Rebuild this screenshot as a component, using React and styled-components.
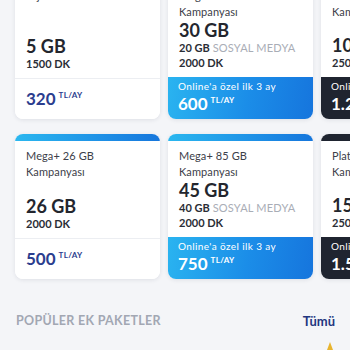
import React from "react";
import styled, { createGlobalStyle } from "styled-components";

const GlobalStyle = createGlobalStyle`
  html, body {
    margin: 0;
    padding: 0;
    background: #f4f5f8;
    font-family: "Lato", "Noto Sans", sans-serif;
    overflow: hidden;
  }
`;

const rows = [
  [
    { title: ["Dijital Paketi"], gb: "5 GB", dk: "1500 DK", price: "320", kind: "plain" },
    { title: ["Mega+ 30 GB", "Kampanyası"], gb: "30 GB", social: "20 GB", dk: "2000 DK", price: "600", kind: "blue" },
    { title: ["Platinum 100 GB", "Kampanyası"], gb: "100 GB", dk: "2500 DK", price: "1.250", kind: "dark" },
  ],
  [
    { title: ["Mega+ 26 GB", "Kampanyası"], gb: "26 GB", dk: "2000 DK", price: "500", kind: "blue", plainFoot: true },
    { title: ["Mega+ 85 GB", "Kampanyası"], gb: "45 GB", social: "40 GB", dk: "2000 DK", price: "750", kind: "blue" },
    { title: ["Platinum 150 GB", "Kampanyası"], gb: "150 GB", dk: "2500 DK", price: "1.500", kind: "dark" },
  ],
];

const Page = styled.div`
  width: 350px;
  height: 350px;
  overflow: hidden;
`;

const Rows = styled.div`
  display: flex;
  flex-direction: column;
  gap: 15px;
  margin-top: -26px;
`;

const Row = styled.div`
  display: flex;
  gap: 8px;
  padding-left: 15px;
`;

const Card = styled.div`
  flex: 0 0 145px;
  height: 145px;
  display: flex;
  flex-direction: column;
  background: #fff;
  border-radius: 8px;
  overflow: hidden;
  box-shadow: 0 1px 4px rgba(30, 40, 70, 0.1);
`;

const Strip = styled.div`
  height: 7px;
  flex-shrink: 0;
  background: ${(p) =>
    p.$kind === "dark"
      ? "#1f2430"
      : p.$kind === "blue"
      ? "linear-gradient(90deg, #2bb7ef 0%, #1e90e6 60%, #1676dc 100%)"
      : "#ffffff"};
`;

const Body = styled.div`
  flex: 1;
  display: flex;
  flex-direction: column;
  padding: 7px 11px 7px;
`;

const Title = styled.div`
  font-size: 11px;
  line-height: 16px;
  color: #3c4049;
  letter-spacing: 0.1px;
`;

const Specs = styled.div`
  margin-top: auto;
  display: flex;
  flex-direction: column;
`;

const Gb = styled.div`
  font-size: 18px;
  line-height: 20px;
  font-weight: 700;
  color: #23262e;
`;

const Small = styled.div`
  font-size: 11px;
  line-height: 15px;
  font-weight: 700;
  color: #2a2d35;
`;

const Social = styled.span`
  font-weight: 400;
  color: #a9adb6;
  margin-left: 3px;
  letter-spacing: 0.2px;
`;

const Foot = styled.div`
  height: 40px;
  flex-shrink: 0;
  display: flex;
  flex-direction: column;
  justify-content: ${(p) => (p.$plain ? "center" : "flex-start")};
  padding: ${(p) => (p.$plain ? "0 11px" : "2px 10px 0")};
  border-top: ${(p) => (p.$plain ? "1px solid #eceef2" : "none")};
  background: ${(p) =>
    p.$plain
      ? "#fff"
      : p.$kind === "dark"
      ? "#1f2430"
      : "linear-gradient(100deg, #2ab4f0 0%, #1b8de8 55%, #1675dd 100%)"};
  color: ${(p) => (p.$plain ? "#2b3d8e" : "#fff")};
`;

const Online = styled.div`
  font-size: 10px;
  line-height: 14px;
  letter-spacing: 0.4px;
`;

const Price = styled.div`
  font-size: 17px;
  line-height: 22px;
  font-weight: 700;
  display: flex;
  align-items: flex-start;
`;

const Unit = styled.span`
  font-size: 8px;
  line-height: 10px;
  font-weight: 700;
  margin-left: 3px;
  margin-top: 2px;
  letter-spacing: 0.3px;
`;

const SectionHead = styled.div`
  display: flex;
  justify-content: space-between;
  align-items: center;
  margin-top: 33px;
  padding: 0 15px 0 16px;
`;

const SectionTitle = styled.div`
  font-size: 12.5px;
  line-height: 18px;
  font-weight: 700;
  letter-spacing: 0.3px;
  color: #a2a7b3;
`;

const AllLink = styled.div`
  font-size: 13px;
  line-height: 18px;
  font-weight: 700;
  color: #233680;
`;

const Peek = styled.div`
  display: flex;
  justify-content: flex-end;
  padding-right: 17px;
  margin-top: 12px;
`;

function PlanCard({ plan }) {
  const plain = plan.kind === "plain" || plan.plainFoot;
  return (
    <Card>
      <Strip $kind={plan.kind} />
      <Body>
        <Title>
          {plan.title.map((t, i) => (
            <div key={i}>{t}</div>
          ))}
        </Title>
        <Specs>
          <Gb>{plan.gb}</Gb>
          {plan.social && (
            <Small>
              {plan.social}
              <Social>SOSYAL MEDYA</Social>
            </Small>
          )}
          <Small>{plan.dk}</Small>
        </Specs>
      </Body>
      <Foot $plain={plain} $kind={plan.kind}>
        {!plain && <Online>Online'a özel ilk 3 ay</Online>}
        <Price>
          {plan.price}
          <Unit>TL/AY</Unit>
        </Price>
      </Foot>
    </Card>
  );
}

export default function App() {
  return (
    <Page>
      <GlobalStyle />
      <Rows>
        {rows.map((row, r) => (
          <Row key={r}>
            {row.map((plan, i) => (
              <PlanCard key={i} plan={plan} />
            ))}
          </Row>
        ))}
      </Rows>
      <SectionHead>
        <SectionTitle>POPÜLER EK PAKETLER</SectionTitle>
        <AllLink>Tümü</AllLink>
      </SectionHead>
      <Peek>
        <svg width="6" height="8" viewBox="0 0 6 8">
          <path d="M3 0 L6 8 L0 8 Z" fill="#e8b42e" />
        </svg>
      </Peek>
    </Page>
  );
}
